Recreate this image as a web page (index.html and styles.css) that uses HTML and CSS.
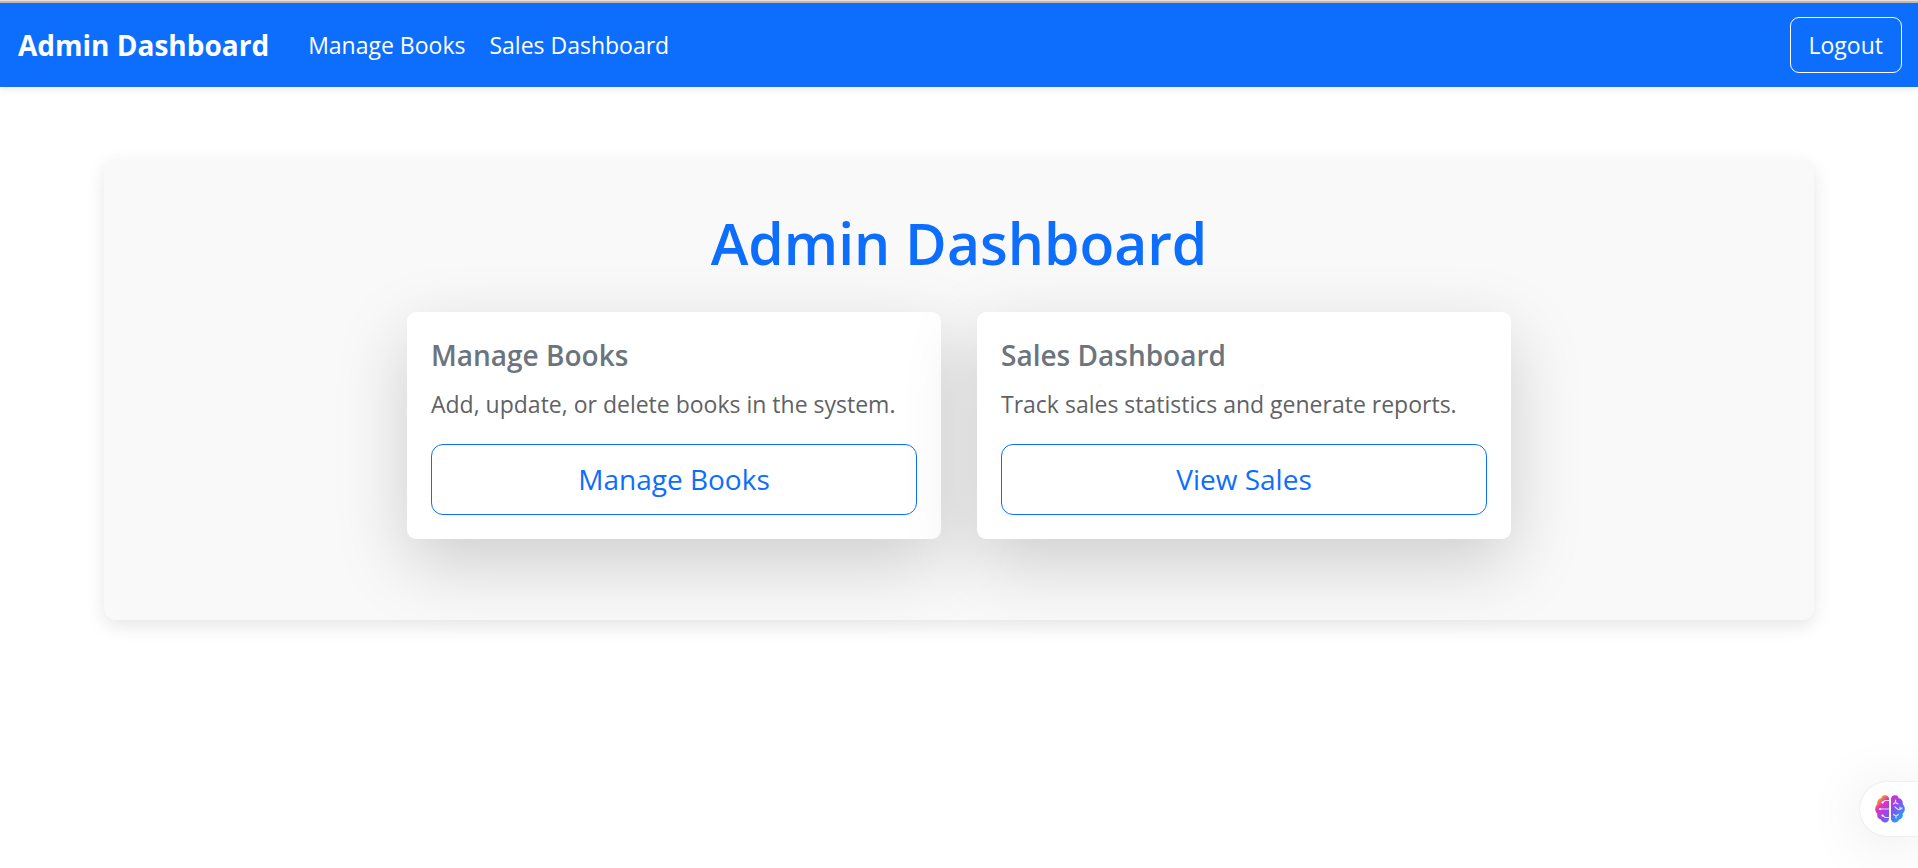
FILE: index.html
```html
<!DOCTYPE html>
<html lang="en">
<head>
<meta charset="utf-8">
<title>Admin Dashboard</title>
<link rel="stylesheet" href="styles.css">
</head>
<body>
<header class="navbar">
  <a class="brand" href="#">Admin Dashboard</a>
  <nav class="nav-links">
    <a href="#books">Manage Books</a>
    <a href="#sales">Sales Dashboard</a>
  </nav>
  <button class="logout" type="button">Logout</button>
</header>
<main class="panel">
  <h1 class="title">Admin Dashboard</h1>
  <div class="cards">
    <section class="card">
      <h2 class="card-title">Manage Books</h2>
      <p class="card-text">Add, update, or delete books in the system.</p>
      <a class="card-btn" href="#books">Manage Books</a>
    </section>
    <section class="card">
      <h2 class="card-title">Sales Dashboard</h2>
      <p class="card-text">Track sales statistics and generate reports.</p>
      <a class="card-btn" href="#sales">View Sales</a>
    </section>
  </div>
</main>
<button class="assistant" type="button" aria-label="Open assistant">
  <svg class="brain" viewBox="0 0 30 28" aria-hidden="true">
    <defs>
      <linearGradient id="g" x1="3" y1="2" x2="27" y2="26" gradientUnits="userSpaceOnUse">
        <stop offset="0.05" stop-color="#f7a11b"/>
        <stop offset="0.25" stop-color="#e52fc0"/>
        <stop offset="0.55" stop-color="#8a4cf0"/>
        <stop offset="0.95" stop-color="#1fa2ff"/>
      </linearGradient>
    </defs>
    <path fill="url(#g)" d="M14 3.500C13.500 1 11.500 0 9.500 0.300C7.500 0.500 6.500 2 6.300 3.200C3.500 3.500 1.700 6 2.300 9C1 10.500 0 12.500 0.200 14.500C0.300 16.500 1.200 17.700 2.300 18.500C1.700 21.500 3 24 5.800 24.600C6.800 26.800 9 28 11 27.500C13 27 14 25.500 14 23.500Z"/>
    <path fill="url(#g)" d="M16 3.500C16.500 1 18.500 0 20.500 0.300C22.500 0.500 23.500 2 23.700 3.200C26.500 3.500 28.300 6 27.700 9C29 10.500 30 12.500 29.800 14.500C29.700 16.500 28.800 17.700 27.700 18.500C28.300 21.500 27 24 24.200 24.600C23.200 26.800 21 28 19 27.500C17 27 16 25.500 16 23.500Z"/>
    <g fill="none" stroke="#fff" stroke-opacity="0.8" stroke-width="1.200" stroke-linecap="round">
      <path d="M14 5.500H10L7.500 7.500M14 14H5M14 22.500H10L7.500 20.500"/>
      <path d="M20.500 5V7.500L18.500 9M20.500 7.500L23 9M20 12L23 14.500H25V12M25 14.500L27 13M18.500 19.500L21 21L23.500 19.500M21 21V23"/>
    </g>
    <g fill="#fff"><circle cx="7.500" cy="7.500" r="1.100"/><circle cx="5" cy="14" r="1.100"/><circle cx="7.500" cy="20.500" r="1.100"/></g>
  </svg>
</button>
</body>
</html>
```
FILE: styles.css
```css
* { box-sizing: border-box; }

body {
  min-height: 100vh;
  margin: 0;
  border-top: 1px solid #e9dfdb;
  background: #fff;
  color: #212529;
  font-family: "Open Sans", "Noto Sans", sans-serif;
  font-size: 23px;
  line-height: 36px;
}

a { color: inherit; text-decoration: none; }

.navbar {
  display: flex;
  align-items: center;
  padding: 14px 16px 14px 18px;
  background: #0d6efd;
  border-top: 2px solid #c5b5af;
  color: #fff;
  box-shadow: 0 3px 6px rgba(0, 0, 0, 0.075);
}

.brand { font-size: 28px; font-weight: 700; margin-right: 39px; }

.nav-links { display: flex; gap: 24px; flex: 1; }

.logout {
  padding: 9px 18px;
  border: 1px solid #fff;
  border-radius: 9px;
  background: transparent;
  color: #fff;
  font: inherit;
}

.panel {
  max-width: 1710px;
  margin: 72px auto 0;
  padding: 48px 0 81px;
  border-radius: 12px;
  background: #f9f9f9;
  box-shadow: 0 6px 18px rgba(0, 0, 0, 0.1);
}

.title {
  margin: 0 0 33px;
  color: #0d6efd;
  font-size: 57px;
  font-weight: 600;
  line-height: 72px;
  text-align: center;
}

.cards { display: flex; justify-content: center; gap: 36px; }

.card {
  flex: 0 1 534px;
  padding: 24px;
  border-radius: 9px;
  background: #fff;
  box-shadow: 0 24px 72px rgba(0, 0, 0, 0.175);
}

.card-title {
  margin: 0 0 12px;
  color: #6c757d;
  font-size: 28px;
  font-weight: 600;
  line-height: 38px;
}

.card-text { margin: 0 0 22px; color: #5f6265; font-size: 23px; }

.card-btn {
  display: block;
  padding: 12px 24px;
  border: 1px solid #0d6efd;
  border-radius: 12px;
  color: #0d6efd;
  font-size: 28px;
  line-height: 45px;
  text-align: center;
}

.assistant {
  position: fixed;
  right: 0;
  bottom: 32px;
  display: flex;
  padding: 13px 13px 13px 15px;
  border: 0;
  border-radius: 27px 0 0 27px;
  background: #fff;
  box-shadow: 0 0 2px rgba(0, 0, 0, 0.15), 0 6px 60px rgba(0, 0, 0, 0.1);
}

.brain { width: 30px; height: 28px; }
```
